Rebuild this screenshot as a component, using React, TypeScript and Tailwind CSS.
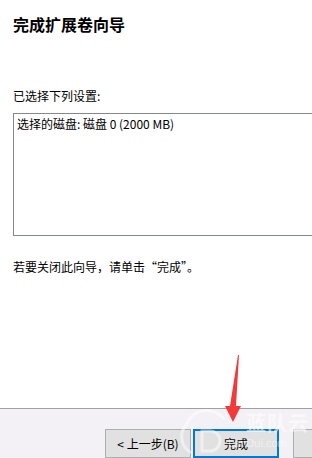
export default function App() {
  const font = { fontFamily: '"Noto Sans CJK SC", "Liberation Sans", sans-serif' };
  return (
    <div className="relative w-[312px] h-[458px] overflow-hidden bg-white text-black" style={font}>
      <div className="h-[408px] pl-[13px] pt-[14px]">
        <div className="text-[16px] leading-[20px] font-bold">完成扩展卷向导</div>
        <div className="mt-[54px] text-[12px] leading-[16px]">已选择下列设置:</div>
        <div className="mt-[9px] w-[320px] h-[123px] border border-[#828790] pl-[3px] pt-[2px] text-[12px] leading-[16px]">
          选择的磁盘: 磁盘 0 (2000 MB)
        </div>
        <div className="mt-[23px] text-[12px] leading-[16px]">若要关闭此向导，请单击“完成”。</div>
      </div>
      <div className="h-[50px] border-t border-[#a0a0a0] bg-[#f3f1f5] pt-[20px] pl-[105px] flex">
        <button className="shrink-0 whitespace-nowrap w-[86px] h-[29px] bg-[#e1e1e1] border border-[#adadad] text-[12px] leading-none flex items-center justify-center">
          &lt; 上一步(B)
        </button>
        <button className="shrink-0 whitespace-nowrap ml-[2px] w-[86px] h-[29px] bg-[#e1e1e1] border-2 border-[#0078d7] text-[12px] leading-none flex items-center justify-center">
          完成
        </button>
        <button aria-label="取消" className="shrink-0 ml-[14px] w-[86px] h-[29px] bg-[#e1e1e1] border border-[#adadad]" />
      </div>
      {/* watermark */}
      <div className="absolute left-[172px] top-[405px] pointer-events-none opacity-50">
        <svg width="70" height="50" viewBox="0 0 70 50" fill="none" stroke="#ffffff" strokeWidth="3">
          <path d="M20 48 A18 18 0 0 1 14 20 A22 22 0 0 1 52 14" />
          <path d="M30 26 v20 h8 a10 10 0 0 0 0 -20 z" />
        </svg>
      </div>
      <div className="absolute left-[246px] top-[412px] pointer-events-none text-white/60 text-[20px] leading-[22px] font-bold tracking-[1px]">
        蓝队云
      </div>
      <div className="absolute left-[228px] top-[437px] pointer-events-none text-white/50 text-[11px] leading-[12px]" style={{ fontFamily: '"Liberation Sans", sans-serif' }}>
        LanDui.com
      </div>
      {/* red arrow */}
      <svg className="absolute left-0 top-0 pointer-events-none" width="312" height="458" viewBox="0 0 312 458">
        <polygon points="238,355 239,355 236,406 241,406 233,422 225,406 230,406" fill="#f23a3a" />
      </svg>
    </div>
  );
}
